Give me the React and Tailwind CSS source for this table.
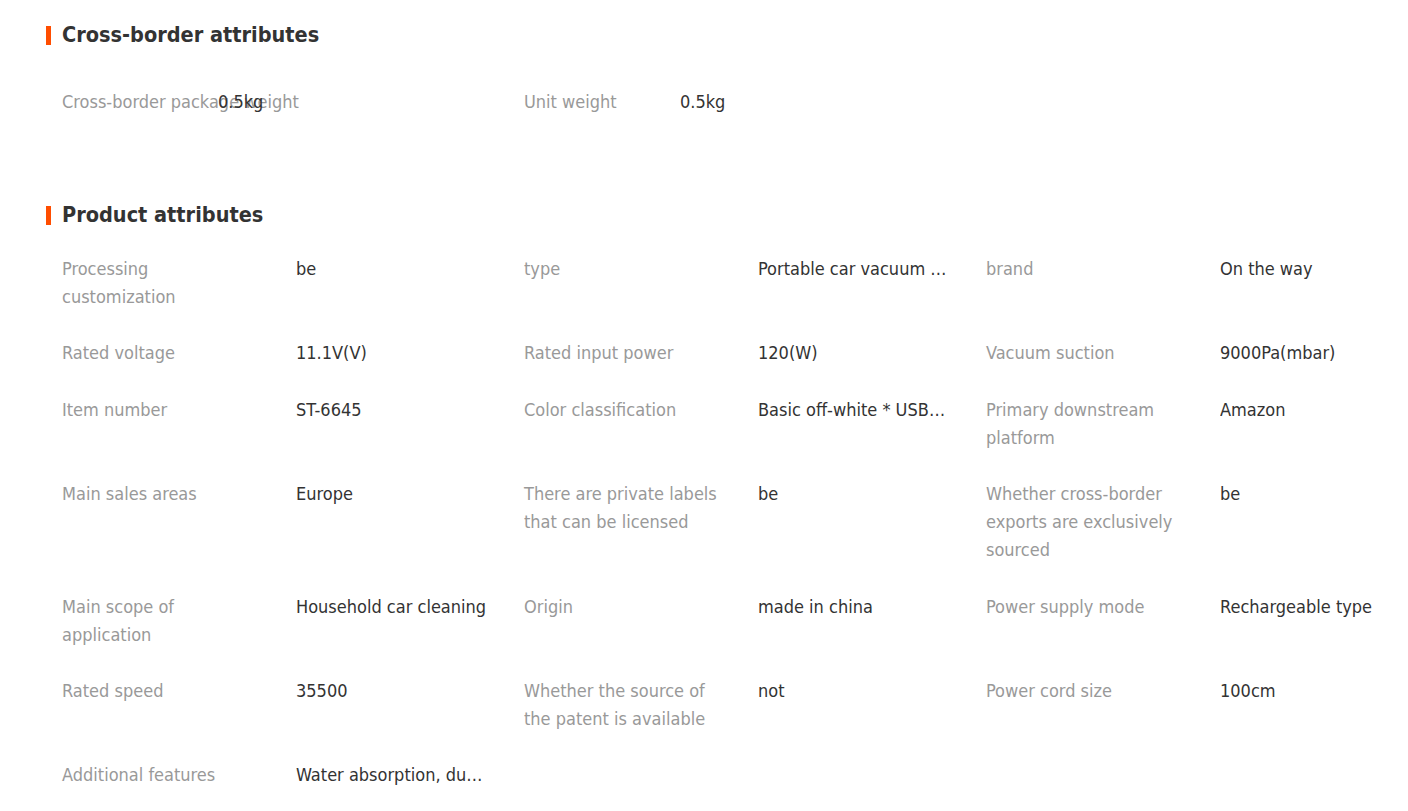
const crossBorder = [
  { label: 'Cross-border package weight', value: '0.5kg' },
  { label: 'Unit weight', value: '0.5kg' },
];

const productAttrs = [
  { label: 'Processing customization', value: 'be' },
  { label: 'type', value: 'Portable car vacuum cleaner' },
  { label: 'brand', value: 'On the way' },
  { label: 'Rated voltage', value: '11.1V(V)' },
  { label: 'Rated input power', value: '120(W)' },
  { label: 'Vacuum suction', value: '9000Pa(mbar)' },
  { label: 'Item number', value: 'ST-6645' },
  { label: 'Color classification', value: 'Basic off-white * USB charging' },
  { label: 'Primary downstream platform', value: 'Amazon' },
  { label: 'Main sales areas', value: 'Europe' },
  { label: 'There are private labels that can be licensed', value: 'be' },
  { label: 'Whether cross-border exports are exclusively sourced', value: 'be' },
  { label: 'Main scope of application', value: 'Household car cleaning' },
  { label: 'Origin', value: 'made in china' },
  { label: 'Power supply mode', value: 'Rechargeable type' },
  { label: 'Rated speed', value: '35500' },
  { label: 'Whether the source of the patent is available', value: 'not' },
  { label: 'Power cord size', value: '100cm' },
  { label: 'Additional features', value: 'Water absorption, dust removal' },
];

function SectionTitle({ children }) {
  return (
    <div className="flex items-center h-7 pl-[46px]">
      <span className="w-[5px] h-[19px] bg-[#ff4d00] mr-[11px]" />
      <h2 className="text-[21.5px] font-bold text-[#333]">{children}</h2>
    </div>
  );
}

export default function App() {
  return (
    <div
      className="min-h-screen bg-white pt-[21px] font-stretch-condensed"
      style={{ fontFamily: '"DejaVu Sans Condensed", "DejaVu Sans", sans-serif' }}
    >
      <SectionTitle>Cross-border attributes</SectionTitle>
      <div className="grid grid-cols-[462px_462px_462px] pl-[62px] mt-[39px] text-[18px] leading-7">
        {crossBorder.map((item) => (
          <div key={item.label} className="flex">
            <div className="w-[156px] shrink-0 whitespace-nowrap text-[#999]">{item.label}</div>
            <div className="text-[#333]">{item.value}</div>
          </div>
        ))}
      </div>

      <div className="mt-[85px]">
        <SectionTitle>Product attributes</SectionTitle>
      </div>
      <div className="grid grid-cols-[462px_462px_462px] gap-y-[28.4px] pl-[62px] mt-[26px] text-[18px] leading-7">
        {productAttrs.map((item) => (
          <div key={item.label} className="flex">
            <div className="w-[204px] mr-[30px] shrink-0 text-[#999]">{item.label}</div>
            <div className="w-[192px] truncate text-[#333]">{item.value}</div>
          </div>
        ))}
      </div>
    </div>
  );
}
